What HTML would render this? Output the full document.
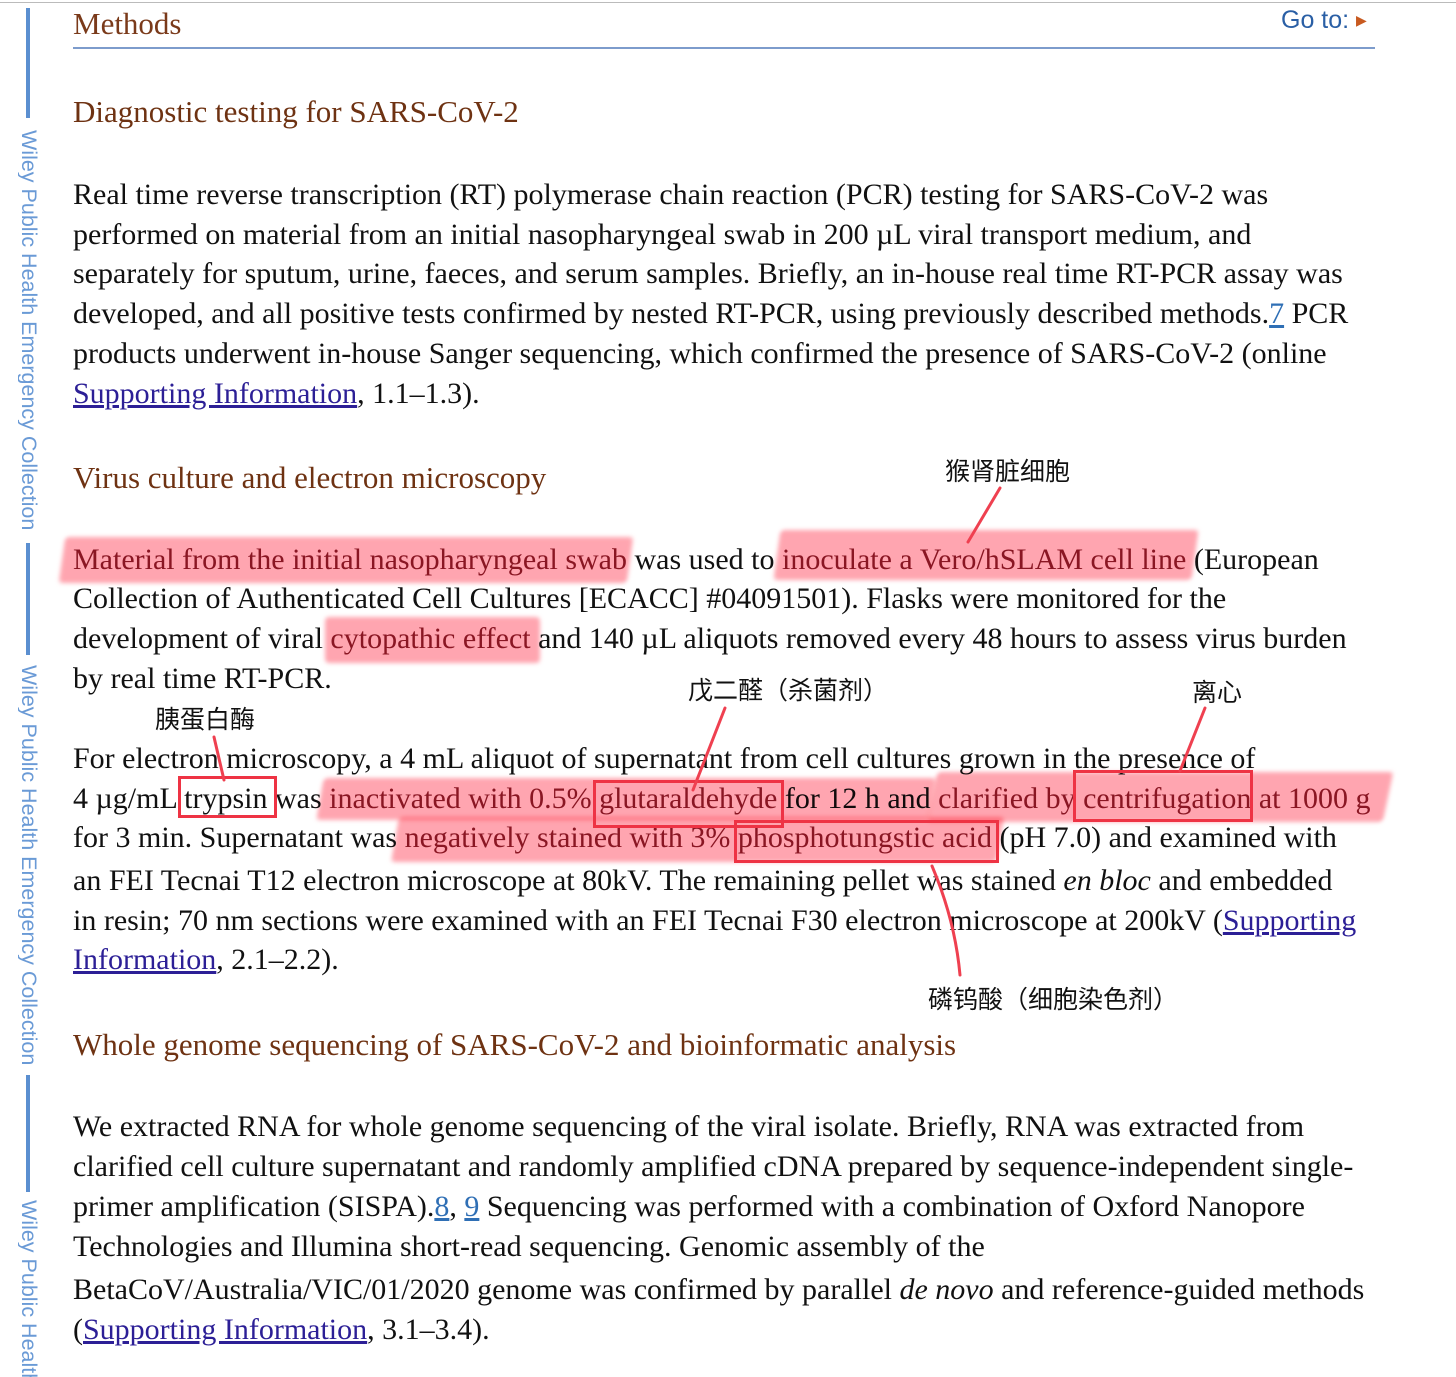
<!DOCTYPE html>
<html><head><meta charset="utf-8"><style>
*{margin:0;padding:0}
html,body{width:1456px;height:1377px;overflow:hidden}
body{background:#fff;position:relative;font-family:"Liberation Serif",serif;color:#111}
.l{position:absolute;left:73px;font-size:30px;line-height:40px;white-space:nowrap}
.h{position:absolute;left:73px;font-size:31px;line-height:40px;color:#6e3212;white-space:nowrap}
a{color:#2c1f96;text-decoration:underline}
a.n{color:#2f6fb5}
.r{color:#8a2232}
.hl{position:absolute;background:#ff8f9c;mix-blend-mode:multiply;filter:blur(2px);border-radius:4px;opacity:.8}
.bx{position:absolute;border:3px solid #ee3344;box-sizing:border-box}
.zh{position:absolute;font-family:"Liberation Sans","Noto Sans CJK SC",sans-serif;font-size:25px;line-height:30px;color:#111;white-space:nowrap}
.bar{position:absolute;left:26px;width:4px;background:#5b8fd0}
.side{position:absolute;left:18px;font-family:"Liberation Sans",sans-serif;font-size:21.5px;color:#6a9ad6;writing-mode:vertical-rl;white-space:nowrap;line-height:22px;overflow:hidden}
</style></head><body>
<div style="position:absolute;left:0;top:2px;width:1456px;height:1px;background:#bbb"></div>
<div class="bar" style="top:8px;height:110px"></div>
<div class="side" style="top:130px">Wiley Public Health Emergency Collection</div>
<div class="bar" style="top:543px;height:112px"></div>
<div class="side" style="top:665px">Wiley Public Health Emergency Collection</div>
<div class="bar" style="top:1075px;height:117px"></div>
<div class="side" style="top:1200px;height:177px">Wiley Public Health</div>

<div class="h" style="top:4px;color:#7a3a1a">Methods</div>
<div style="position:absolute;left:1281px;top:6px;font-family:'Liberation Sans',sans-serif;font-size:25px;color:#2a5fa5;white-space:nowrap">Go to: <span style="color:#c85a20;font-size:14px;vertical-align:3px">▶</span></div>
<div style="position:absolute;left:73px;top:47px;width:1302px;height:2px;background:#7d9ccc"></div>

<div class="h" style="top:92px">Diagnostic testing for SARS-CoV-2</div>
<div class="l" style="top:175px">Real time reverse transcription (RT) polymerase chain reaction (PCR) testing for SARS-CoV-2 was</div>
<div class="l" style="top:215px">performed on material from an initial nasopharyngeal swab in 200 µL viral transport medium, and</div>
<div class="l" style="top:254px">separately for sputum, urine, faeces, and serum samples. Briefly, an in-house real time RT-PCR assay was</div>
<div class="l" style="top:294px">developed, and all positive tests confirmed by nested RT-PCR, using previously described methods.<a class="n">7</a> PCR</div>
<div class="l" style="top:334px">products underwent in-house Sanger sequencing, which confirmed the presence of SARS-CoV-2 (online</div>
<div class="l" style="top:374px"><a>Supporting Information</a>, 1.1–1.3).</div>

<div class="h" style="top:458px">Virus culture and electron microscopy</div>
<div class="l" style="top:540px"><span class="r">Material from the initial nasopharyngeal swab</span> was used to <span class="r">inoculate a Vero/hSLAM cell line</span> (European</div>
<div class="l" style="top:579px">Collection of Authenticated Cell Cultures [ECACC] #04091501). Flasks were monitored for the</div>
<div class="l" style="top:619px">development of viral <span class="r">cytopathic effect</span> and 140 µL aliquots removed every 48 hours to assess virus burden</div>
<div class="l" style="top:659px">by real time RT-PCR.</div>

<div class="l" style="top:739px">For electron microscopy, a 4 mL aliquot of supernatant from cell cultures grown in the presence of</div>
<div class="l" style="top:779px">4 µg/mL trypsin was <span class="r">inactivated with 0.5% glutaraldehyde</span> for 12 h and <span class="r">clarified by centrifugation at 1000 g</span></div>
<div class="l" style="top:818px">for 3 min. Supernatant was <span class="r">negatively stained with 3% phosphotungstic acid</span> (pH 7.0) and examined with</div>
<div class="l" style="top:861px">an FEI Tecnai T12 electron microscope at 80kV. The remaining pellet was stained <i>en bloc</i> and embedded</div>
<div class="l" style="top:901px">in resin; 70 nm sections were examined with an FEI Tecnai F30 electron microscope at 200kV (<a>Supporting</a></div>
<div class="l" style="top:940px"><a>Information</a>, 2.1–2.2).</div>

<div class="h" style="top:1025px">Whole genome sequencing of SARS-CoV-2 and bioinformatic analysis</div>
<div class="l" style="top:1107px">We extracted RNA for whole genome sequencing of the viral isolate. Briefly, RNA was extracted from</div>
<div class="l" style="top:1147px">clarified cell culture supernatant and randomly amplified cDNA prepared by sequence-independent single-</div>
<div class="l" style="top:1187px">primer amplification (SISPA).<a class="n">8</a>, <a class="n">9</a> Sequencing was performed with a combination of Oxford Nanopore</div>
<div class="l" style="top:1227px">Technologies and Illumina short-read sequencing. Genomic assembly of the</div>
<div class="l" style="top:1270px">BetaCoV/Australia/VIC/01/2020 genome was confirmed by parallel <i>de novo</i> and reference-guided methods</div>
<div class="l" style="top:1310px">(<a>Supporting Information</a>, 3.1–3.4).</div>

<div class="hl" style="left:62px;top:537px;width:568px;height:46px;transform:skewX(-8deg)"></div>
<div class="hl" style="left:777px;top:530px;width:418px;height:50px;transform:skewX(-8deg)"></div>
<div class="hl" style="left:325px;top:617px;width:215px;height:46px"></div>
<div class="hl" style="left:320px;top:778px;width:612px;height:42px;transform:skewX(-10deg)"></div>
<div class="hl" style="left:932px;top:772px;width:456px;height:50px;transform:skewX(-12deg)"></div>
<div class="hl" style="left:395px;top:817px;width:605px;height:45px;transform:skewX(-10deg)"></div>

<div class="bx" style="left:178px;top:776px;width:99px;height:42px"></div>
<div class="bx" style="left:593px;top:780px;width:191px;height:48px"></div>
<div class="bx" style="left:1073px;top:770px;width:180px;height:52px"></div>
<div class="bx" style="left:734px;top:820px;width:265px;height:43px"></div>

<svg style="position:absolute;left:0;top:0" width="1456" height="1377"><g stroke="#ef4050" stroke-width="3" fill="none" stroke-linecap="round">
<path d="M1000 488 L968 542"/>
<path d="M214 737 L224 780"/>
<path d="M725 708 L693 790"/>
<path d="M1205 708 L1180 771"/>
<path d="M932 866 Q955 920 960 975"/>
</g></svg>

<div class="zh" style="left:945px;top:457px">猴肾脏细胞</div>
<div class="zh" style="left:155px;top:705px">胰蛋白酶</div>
<div class="zh" style="left:688px;top:676px">戊二醛（杀菌剂）</div>
<div class="zh" style="left:1192px;top:678px">离心</div>
<div class="zh" style="left:928px;top:985px">磷钨酸（细胞染色剂）</div>
</body></html>
